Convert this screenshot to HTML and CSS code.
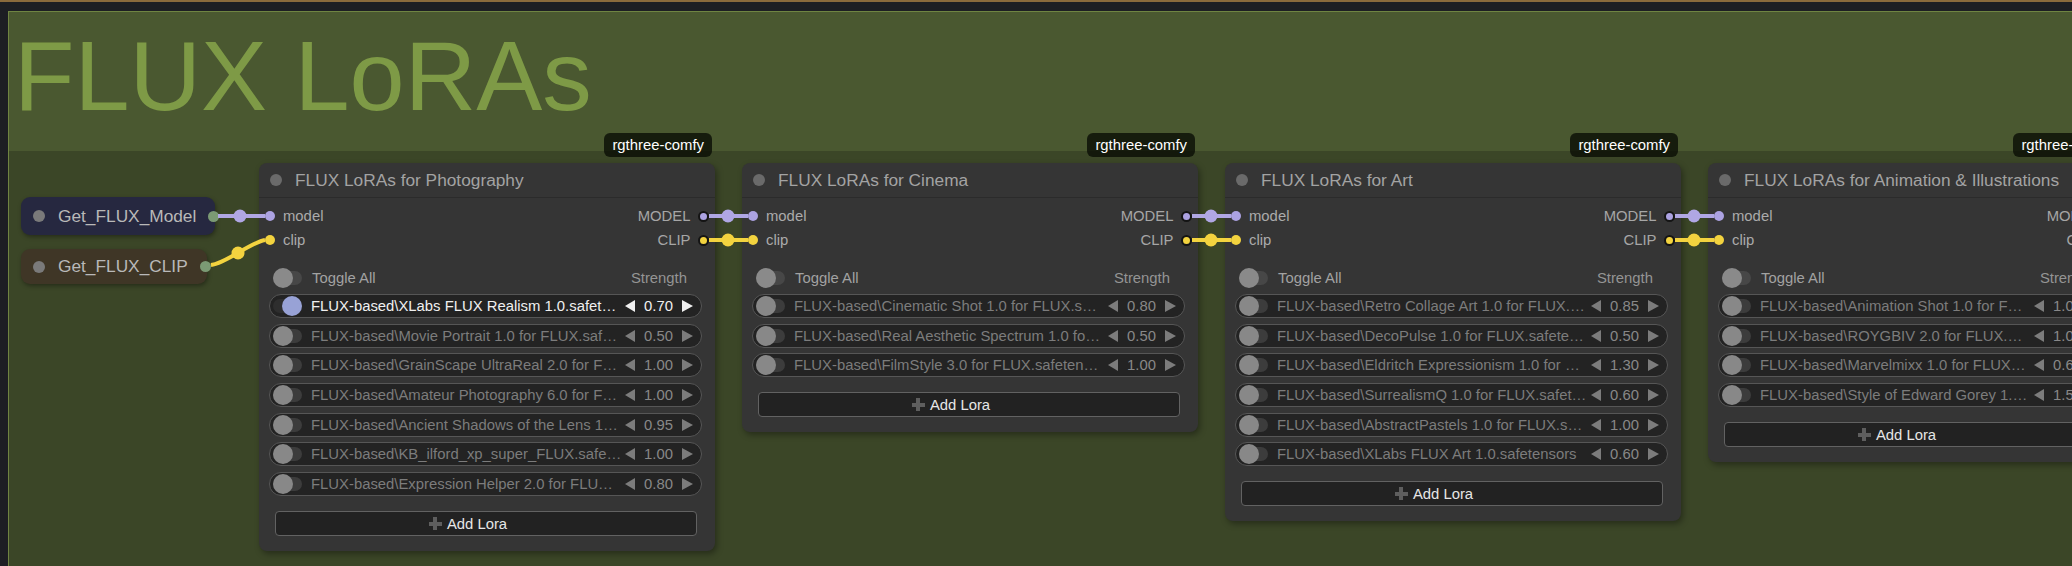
FILE: index.html
```html
<!DOCTYPE html>
<html>
<head>
<meta charset="utf-8">
<link rel="stylesheet" href="styles.css">
</head>
<body>
<div class="topbar"></div>
<div class="group">
  <div class="group-header"><h1 class="group-title">FLUX LoRAs</h1></div>
  <div class="group-body">
    <div class="getters">
      <div class="getter getter-model"><span class="gdot"></span><span class="gname">Get_FLUX_Model</span><span class="gout"></span></div>
      <div class="getter getter-clip"><span class="gdot"></span><span class="gname">Get_FLUX_CLIP</span><span class="gout"></span></div>
    </div>

    <div class="node">
      <div class="badge">rgthree-comfy</div>
      <div class="node-title"><span class="tdot"></span><span class="ttext">FLUX LoRAs for Photography</span></div>
      <div class="slots">
        <div class="slot"><span class="in in-model"></span><span class="slot-label">model</span><span class="slot-out">MODEL</span><span class="out out-model"></span></div>
        <div class="slot"><span class="in in-clip"></span><span class="slot-label">clip</span><span class="slot-out">CLIP</span><span class="out out-clip"></span></div>
      </div>
      <div class="toggle-head"><span class="toggle"><span class="knob"></span></span><span class="th-label">Toggle All</span><span class="th-strength">Strength</span></div>
      <div class="loras">
        <div class="lora on"><span class="toggle"><span class="knob"></span></span><span class="lname">FLUX-based\XLabs FLUX Realism 1.0.safet…</span><span class="strength"><span class="arr-l"></span><span class="val">0.70</span><span class="arr-r"></span></span></div>
        <div class="lora"><span class="toggle"><span class="knob"></span></span><span class="lname">FLUX-based\Movie Portrait 1.0 for FLUX.saf…</span><span class="strength"><span class="arr-l"></span><span class="val">0.50</span><span class="arr-r"></span></span></div>
        <div class="lora"><span class="toggle"><span class="knob"></span></span><span class="lname">FLUX-based\GrainScape UltraReal 2.0 for F…</span><span class="strength"><span class="arr-l"></span><span class="val">1.00</span><span class="arr-r"></span></span></div>
        <div class="lora"><span class="toggle"><span class="knob"></span></span><span class="lname">FLUX-based\Amateur Photography 6.0 for F…</span><span class="strength"><span class="arr-l"></span><span class="val">1.00</span><span class="arr-r"></span></span></div>
        <div class="lora"><span class="toggle"><span class="knob"></span></span><span class="lname">FLUX-based\Ancient Shadows of the Lens 1…</span><span class="strength"><span class="arr-l"></span><span class="val">0.95</span><span class="arr-r"></span></span></div>
        <div class="lora"><span class="toggle"><span class="knob"></span></span><span class="lname">FLUX-based\KB_ilford_xp_super_FLUX.safe…</span><span class="strength"><span class="arr-l"></span><span class="val">1.00</span><span class="arr-r"></span></span></div>
        <div class="lora"><span class="toggle"><span class="knob"></span></span><span class="lname">FLUX-based\Expression Helper 2.0 for FLU…</span><span class="strength"><span class="arr-l"></span><span class="val">0.80</span><span class="arr-r"></span></span></div>
      </div>
      <div class="add"><span class="plus"></span><span>Add Lora</span></div>
    </div>

    <div class="node">
      <div class="badge">rgthree-comfy</div>
      <div class="node-title"><span class="tdot"></span><span class="ttext">FLUX LoRAs for Cinema</span></div>
      <div class="slots">
        <div class="slot"><span class="in in-model"></span><span class="slot-label">model</span><span class="slot-out">MODEL</span><span class="out out-model"></span></div>
        <div class="slot"><span class="in in-clip"></span><span class="slot-label">clip</span><span class="slot-out">CLIP</span><span class="out out-clip"></span></div>
      </div>
      <div class="toggle-head"><span class="toggle"><span class="knob"></span></span><span class="th-label">Toggle All</span><span class="th-strength">Strength</span></div>
      <div class="loras">
        <div class="lora"><span class="toggle"><span class="knob"></span></span><span class="lname">FLUX-based\Cinematic Shot 1.0 for FLUX.s…</span><span class="strength"><span class="arr-l"></span><span class="val">0.80</span><span class="arr-r"></span></span></div>
        <div class="lora"><span class="toggle"><span class="knob"></span></span><span class="lname">FLUX-based\Real Aesthetic Spectrum 1.0 fo…</span><span class="strength"><span class="arr-l"></span><span class="val">0.50</span><span class="arr-r"></span></span></div>
        <div class="lora"><span class="toggle"><span class="knob"></span></span><span class="lname">FLUX-based\FilmStyle 3.0 for FLUX.safeten…</span><span class="strength"><span class="arr-l"></span><span class="val">1.00</span><span class="arr-r"></span></span></div>
      </div>
      <div class="add"><span class="plus"></span><span>Add Lora</span></div>
    </div>

    <div class="node">
      <div class="badge">rgthree-comfy</div>
      <div class="node-title"><span class="tdot"></span><span class="ttext">FLUX LoRAs for Art</span></div>
      <div class="slots">
        <div class="slot"><span class="in in-model"></span><span class="slot-label">model</span><span class="slot-out">MODEL</span><span class="out out-model"></span></div>
        <div class="slot"><span class="in in-clip"></span><span class="slot-label">clip</span><span class="slot-out">CLIP</span><span class="out out-clip"></span></div>
      </div>
      <div class="toggle-head"><span class="toggle"><span class="knob"></span></span><span class="th-label">Toggle All</span><span class="th-strength">Strength</span></div>
      <div class="loras">
        <div class="lora"><span class="toggle"><span class="knob"></span></span><span class="lname">FLUX-based\Retro Collage Art 1.0 for FLUX.…</span><span class="strength"><span class="arr-l"></span><span class="val">0.85</span><span class="arr-r"></span></span></div>
        <div class="lora"><span class="toggle"><span class="knob"></span></span><span class="lname">FLUX-based\DecoPulse 1.0 for FLUX.safete…</span><span class="strength"><span class="arr-l"></span><span class="val">0.50</span><span class="arr-r"></span></span></div>
        <div class="lora"><span class="toggle"><span class="knob"></span></span><span class="lname">FLUX-based\Eldritch Expressionism 1.0 for …</span><span class="strength"><span class="arr-l"></span><span class="val">1.30</span><span class="arr-r"></span></span></div>
        <div class="lora"><span class="toggle"><span class="knob"></span></span><span class="lname">FLUX-based\SurrealismQ 1.0 for FLUX.safet…</span><span class="strength"><span class="arr-l"></span><span class="val">0.60</span><span class="arr-r"></span></span></div>
        <div class="lora"><span class="toggle"><span class="knob"></span></span><span class="lname">FLUX-based\AbstractPastels 1.0 for FLUX.s…</span><span class="strength"><span class="arr-l"></span><span class="val">1.00</span><span class="arr-r"></span></span></div>
        <div class="lora"><span class="toggle"><span class="knob"></span></span><span class="lname">FLUX-based\XLabs FLUX Art 1.0.safetensors</span><span class="strength"><span class="arr-l"></span><span class="val">0.60</span><span class="arr-r"></span></span></div>
      </div>
      <div class="add"><span class="plus"></span><span>Add Lora</span></div>
    </div>

    <div class="node node-narrow">
      <div class="badge">rgthree-comfy</div>
      <div class="node-title"><span class="tdot"></span><span class="ttext">FLUX LoRAs for Animation &amp; Illustrations</span></div>
      <div class="slots">
        <div class="slot"><span class="in in-model"></span><span class="slot-label">model</span><span class="slot-out">MODEL</span><span class="out out-model"></span></div>
        <div class="slot"><span class="in in-clip"></span><span class="slot-label">clip</span><span class="slot-out">CLIP</span><span class="out out-clip"></span></div>
      </div>
      <div class="toggle-head"><span class="toggle"><span class="knob"></span></span><span class="th-label">Toggle All</span><span class="th-strength">Strength</span></div>
      <div class="loras">
        <div class="lora"><span class="toggle"><span class="knob"></span></span><span class="lname">FLUX-based\Animation Shot 1.0 for F…</span><span class="strength"><span class="arr-l"></span><span class="val">1.00</span><span class="arr-r"></span></span></div>
        <div class="lora"><span class="toggle"><span class="knob"></span></span><span class="lname">FLUX-based\ROYGBIV 2.0 for FLUX.…</span><span class="strength"><span class="arr-l"></span><span class="val">1.00</span><span class="arr-r"></span></span></div>
        <div class="lora"><span class="toggle"><span class="knob"></span></span><span class="lname">FLUX-based\Marvelmixx 1.0 for FLUX…</span><span class="strength"><span class="arr-l"></span><span class="val">0.60</span><span class="arr-r"></span></span></div>
        <div class="lora"><span class="toggle"><span class="knob"></span></span><span class="lname">FLUX-based\Style of Edward Gorey 1.…</span><span class="strength"><span class="arr-l"></span><span class="val">1.50</span><span class="arr-r"></span></span></div>
      </div>
      <div class="add"><span class="plus"></span><span>Add Lora</span></div>
    </div>

    <svg class="links" width="2300" height="500" viewBox="0 0 2300 500">
      <g class="link-model">
        <line x1="209" y1="65" x2="256" y2="65"/>
        <circle cx="231" cy="65" r="6.5"/>
        <line x1="700" y1="65" x2="739" y2="65"/>
        <circle cx="719" cy="65" r="6.5"/>
        <line x1="1183" y1="65" x2="1222" y2="65"/>
        <circle cx="1202" cy="65" r="6.5"/>
        <line x1="1666" y1="65" x2="1705" y2="65"/>
        <circle cx="1685" cy="65" r="6.5"/>
      </g>
      <g class="link-clip">
        <path d="M202 114 C 218 112, 240 92, 256 89"/>
        <circle cx="229" cy="102" r="6.5"/>
        <line x1="700" y1="89" x2="739" y2="89"/>
        <circle cx="719" cy="89" r="6.5"/>
        <line x1="1183" y1="89" x2="1222" y2="89"/>
        <circle cx="1202" cy="89" r="6.5"/>
        <line x1="1666" y1="89" x2="1705" y2="89"/>
        <circle cx="1685" cy="89" r="6.5"/>
      </g>
    </svg>
  </div>
</div>
</body>
</html>
```

FILE: styles.css
```css
* { box-sizing: border-box; }

body {
  margin: 0;
  width: 2072px;
  height: 566px;
  overflow: hidden;
  background: #1d1e23;
  font-family: "Liberation Sans", Arial, Helvetica, sans-serif;
}

.topbar {
  height: 2px;
  background: #8a6a3c;
}

.group {
  margin: 9px 0 0 8px;
  width: 2300px;
  height: 600px;
  border-top: 1px solid #6f8442;
  border-left: 1px solid #6f8442;
  background: #3b4627;
}

.group-header {
  height: 139px;
  background: #4a5830;
}

.group-title {
  margin: 0;
  padding: 14px 0 0 5px;
  font-size: 99px;
  line-height: 99px;
  font-weight: 400;
  color: #7e9a46;
  white-space: nowrap;
}

.group-body {
  position: relative;
  display: flex;
  align-items: flex-start;
  padding: 12px 0 0 12px;
}

/* getter nodes */
.getters {
  width: 194px;
  margin-top: 34px;
  margin-right: 44px;
  display: flex;
  flex-direction: column;
  gap: 14px;
  flex-shrink: 0;
}

.getter {
  position: relative;
  display: flex;
  align-items: center;
  height: 38px;
  border-radius: 9px;
  padding-left: 12px;
  box-shadow: 1px 2px 4px rgba(0,0,0,0.35);
}

.getter-model {
  width: 194px;
  background: #262840;
}

.getter-clip {
  width: 186px;
  height: 35px;
  background: #3f3626;
}

.gdot {
  width: 12px;
  height: 12px;
  border-radius: 50%;
  background: #7a7a7a;
}

.gname {
  margin-left: 13px;
  font-size: 17.3px;
  color: #b9b9b9;
  white-space: nowrap;
}

.gout {
  position: absolute;
  right: -4px;
  top: 50%;
  width: 11px;
  height: 11px;
  margin-top: -5.5px;
  border-radius: 50%;
  background: #7b9a74;
}

/* lora nodes */
.node {
  position: relative;
  width: 456px;
  flex-shrink: 0;
  background: #353535;
  border-radius: 8px;
  box-shadow: 2px 3px 6px rgba(0,0,0,0.35);
  padding-bottom: 15px;
}

.node + .node { margin-left: 27px; }

.node-narrow { width: 416px; }

.badge {
  position: absolute;
  top: -30px;
  right: 3px;
  height: 24px;
  padding: 0 8px;
  border-radius: 6px;
  background: rgba(8, 12, 4, 0.78);
  color: #ffffff;
  font-size: 14.85px;
  line-height: 24px;
  white-space: nowrap;
}

.node-title {
  display: flex;
  align-items: center;
  height: 35px;
  border-bottom: 1px solid #2b2b2b;
  padding-left: 11px;
}

.tdot {
  width: 12px;
  height: 12px;
  border-radius: 50%;
  background: #6a6a6a;
}

.ttext {
  margin-left: 13px;
  font-size: 17.3px;
  color: #a3a3a3;
  white-space: nowrap;
}

.slots { padding-top: 6px; }

.slot {
  display: flex;
  align-items: center;
  height: 24px;
  font-size: 14.85px;
}

.in {
  width: 10px;
  height: 10px;
  margin-left: 6px;
  border-radius: 50%;
}

.slot-label {
  margin-left: 8px;
  color: #ababab;
}

.slot-out {
  margin-left: auto;
  margin-right: 7px;
  color: #a6a6a6;
}

.out {
  width: 11px;
  height: 11px;
  margin-right: 6.5px;
  border-radius: 50%;
  border: 2px solid #141414;
}

.in-model, .out-model { background: #aca2e2; }
.in-clip, .out-clip { background: #f3d33f; }

/* toggles */
.toggle {
  position: relative;
  display: block;
  width: 29px;
  height: 20px;
  flex-shrink: 0;
}

.toggle::before {
  content: "";
  position: absolute;
  left: 0;
  right: 0;
  top: 3px;
  bottom: 3px;
  border-radius: 7px;
  background: #3c3c3c;
}

.knob {
  position: absolute;
  left: 0;
  top: 0;
  width: 20px;
  height: 20px;
  border-radius: 50%;
  background: #888888;
}

.toggle-head {
  display: flex;
  align-items: center;
  height: 24px;
  margin: 14px 13px 0 10px;
  padding: 0 15px 0 4px;
  font-size: 14.85px;
}

.toggle-head .toggle::before { background: #474747; }
.toggle-head .knob { background: #8a8a8a; }

.th-label {
  margin-left: 10px;
  color: #a2a2a2;
}

.th-strength {
  margin-left: auto;
  color: #949494;
}

.loras {
  display: flex;
  flex-direction: column;
  gap: 5.7px;
  margin: 4px 13px 0 10px;
}

.lora {
  display: flex;
  align-items: center;
  height: 24px;
  padding: 0 8px 0 3px;
  border: 1px solid #565656;
  border-radius: 13px;
  background: #232323;
  font-size: 14.85px;
  color: #7c7c7c;
}

.lname {
  margin-left: 9px;
  white-space: nowrap;
}

.strength {
  margin-left: auto;
  display: flex;
  align-items: center;
  flex-shrink: 0;
}

.val {
  margin: 0 9px;
  color: #888888;
}

.arr-l, .arr-r {
  width: 0;
  height: 0;
  border-top: 6px solid transparent;
  border-bottom: 6px solid transparent;
}

.arr-l { border-right: 10px solid #7c7c7c; }
.arr-r { border-left: 11px solid #7c7c7c; }

.lora.on { color: #f0f0f0; }
.lora.on .val { color: #f0f0f0; }
.lora.on .arr-l { border-right-color: #f0f0f0; }
.lora.on .arr-r { border-left-color: #f0f0f0; }
.lora.on .toggle::before { background: #2e2e2e; }
.lora.on .knob { left: auto; right: 0; background: #98a2d6; }

/* add button */
.add {
  display: flex;
  align-items: center;
  justify-content: center;
  height: 25px;
  margin: 15px 18px 0 16px;
  padding-right: 36px;
  border: 1px solid #626262;
  border-radius: 4px;
  background: #222222;
  color: #e6e6e6;
  font-size: 14.85px;
}

.plus {
  position: relative;
  width: 13px;
  height: 13px;
  margin-right: 5px;
}

.plus::before, .plus::after {
  content: "";
  position: absolute;
  background: #5e5e5e;
}

.plus::before { left: 0; right: 0; top: 4.5px; height: 4px; }
.plus::after { top: 0; bottom: 0; left: 4.5px; width: 4px; }

/* links */
.links {
  position: absolute;
  left: 0;
  top: 0;
  overflow: visible;
  pointer-events: none;
}

.link-model line, .link-model path { stroke: #b0a7e4; stroke-width: 4; fill: none; }
.link-model circle { fill: #b0a7e4; }
.link-clip line, .link-clip path { stroke: #f3d33f; stroke-width: 4; fill: none; }
.link-clip circle { fill: #f3d33f; }
```
